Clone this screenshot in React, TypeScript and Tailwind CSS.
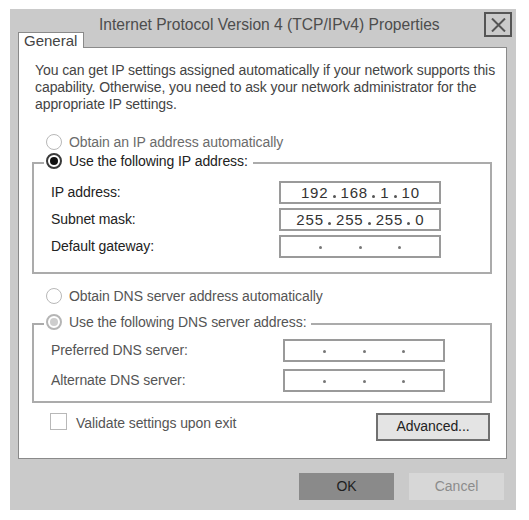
import React from "react";

function Radio({ kind }: { kind: "off" | "on" | "dim" }) {
  if (kind === "off")
    return <span className="w-[16px] h-[16px] rounded-full border border-[#b8b8b8] bg-white shrink-0" />;
  if (kind === "on")
    return (
      <span className="w-[16px] h-[16px] rounded-full border-2 border-[#3a3a3a] bg-white shrink-0 flex items-center justify-center">
        <span className="w-[8px] h-[8px] rounded-full bg-[#111]" />
      </span>
    );
  return (
    <span className="w-[16px] h-[16px] rounded-full border-2 border-[#b5b5b5] bg-white shrink-0 flex items-center justify-center">
      <span className="w-[8px] h-[8px] rounded-full bg-[#cdcdcd]" />
    </span>
  );
}

function IpBox({ parts }: { parts: string[] | null }) {
  const segs = parts ?? ["", "", "", ""];
  return (
    <div className="w-[162px] h-[23px] border-2 border-[#9a9a9a] bg-white flex items-center justify-center gap-[5px] text-[15px] leading-[18px] text-[#333] tracking-normal">
      {segs.map((s, i) => (
        <React.Fragment key={i}>
          {i > 0 && (
            <span
              className={
                parts
                  ? "w-[3px] h-[3px] rounded-full bg-[#555] translate-y-[4px]"
                  : "w-[3px] h-[3px] rounded-full bg-[#777] translate-y-[1px]"
              }
            />
          )}
          <span className={parts ? "tracking-[0.8px] mr-[-0.8px]" : "w-[26.5px]"}>{s}</span>
        </React.Fragment>
      ))}
    </div>
  );
}

export default function App() {
  return (
    <div className="w-[529px] h-[520px] bg-white pt-[9px] pl-[10px] font-['Liberation_Sans',Arial,sans-serif]">
      <div className="w-[506px] h-[501px] bg-[#cacaca] flex flex-col">
        {/* header */}
        <div className="flex h-[38px] pl-[8px] pr-[4px]">
          <div className="flex flex-col flex-1">
            <div className="pl-[81px] pt-[7px] -mb-[3px] text-[15.6px] leading-[18px] text-[#4d4d4d] whitespace-nowrap">
              Internet Protocol Version 4 (TCP/IPv4) Properties
            </div>
            <div className="mt-auto -mb-[1px] relative z-10 w-[66px] h-[16px] bg-white border-t border-l border-r border-[#8a8a8a] pl-[5px] text-[15px] leading-[16px] text-[#444]">
              General
            </div>
          </div>
          <div className="mt-[3px] w-[28px] h-[25px] border-2 border-[#555] flex items-center justify-center">
            <svg width="15" height="14" viewBox="0 0 15 14">
              <path d="M1 0.5 L14 13.5 M14 0.5 L1 13.5" stroke="#555" strokeWidth="2" fill="none" />
            </svg>
          </div>
        </div>

        {/* panel */}
        <div className="mx-[8px] w-[489px] h-[412px] border border-[#8a8a8a] bg-white flex flex-col text-[14px] leading-[20px] tracking-[-0.08px]">
          <p className="pl-[16px] pt-[14px] leading-[17px] text-[#444] whitespace-nowrap">
            You can get IP settings assigned automatically if your network supports this
            <br />
            capability. Otherwise, you need to ask your network administrator for the
            <br />
            appropriate IP settings.
          </p>

          <div className="mt-[19px] pl-[27px] flex items-center gap-[7px] text-[#6b6b6b]">
            <Radio kind="off" />
            <span>Obtain an IP address automatically</span>
          </div>

          <fieldset className="ml-[13px] -mt-[1px] w-[460px] border-2 border-[#ababab] pb-[14px]">
            <legend className="ml-[10px] pl-[2px] pr-[5px] pb-[4px]">
              <span className="flex items-center gap-[7px] text-[#222]">
                <Radio kind="on" />
                <span>Use the following IP address:</span>
              </span>
            </legend>
            <div className="mt-[6px] flex flex-col gap-[4px] pl-[17px] text-[#222]">
              <div className="flex items-center">
                <span className="w-[228px] -translate-y-[1px]">IP address:</span>
                <IpBox parts={["192", "168", "1", "10"]} />
              </div>
              <div className="flex items-center">
                <span className="w-[228px] -translate-y-[1px]">Subnet mask:</span>
                <IpBox parts={["255", "255", "255", "0"]} />
              </div>
              <div className="flex items-center">
                <span className="w-[228px] -translate-y-[1px]">Default gateway:</span>
                <IpBox parts={null} />
              </div>
            </div>
          </fieldset>

          <div className="mt-[12px] pl-[27px] flex items-center gap-[7px] text-[#555]">
            <Radio kind="off" />
            <span>Obtain DNS server address automatically</span>
          </div>

          <fieldset className="ml-[13px] mt-[6px] w-[460px] border-2 border-[#ababab] pb-[9px]">
            <legend className="ml-[10px] pl-[2px] pr-[5px] pb-[4px]">
              <span className="flex items-center gap-[7px] text-[#555]">
                <Radio kind="dim" />
                <span>Use the following DNS server address:</span>
              </span>
            </legend>
            <div className="mt-[3px] flex flex-col gap-[7px] pl-[17px] text-[#555]">
              <div className="flex items-center">
                <span className="w-[232px] -translate-y-[1px]">Preferred DNS server:</span>
                <IpBox parts={null} />
              </div>
              <div className="flex items-center">
                <span className="w-[232px] -translate-y-[1px]">Alternate DNS server:</span>
                <IpBox parts={null} />
              </div>
            </div>
          </fieldset>

          <div className="mt-[10px] pl-[31px] pr-[16px] flex items-start">
            <span className="w-[17px] h-[17px] border border-[#b8b8b8] bg-white shrink-0" />
            <span className="ml-[9px] text-[#555]">Validate settings upon exit</span>
            <div className="ml-auto w-[114px] h-[28px] border-2 border-[#707070] bg-[#e4e4e4] flex items-center justify-center text-[#222] leading-[18px] pb-[2px]">
              Advanced...
            </div>
          </div>
        </div>

        {/* buttons */}
        <div className="mt-[14px] flex justify-end gap-[15px] pr-[12px] text-[14px]">
          <div className="w-[95px] h-[27px] bg-[#8a8a8a] flex items-center justify-center text-[#1f1f1f] pb-[1px]">OK</div>
          <div className="w-[95px] h-[27px] bg-[#d7d7d7] flex items-center justify-center text-[#8c8c8c] pb-[1px]">Cancel</div>
        </div>
      </div>
    </div>
  );
}
